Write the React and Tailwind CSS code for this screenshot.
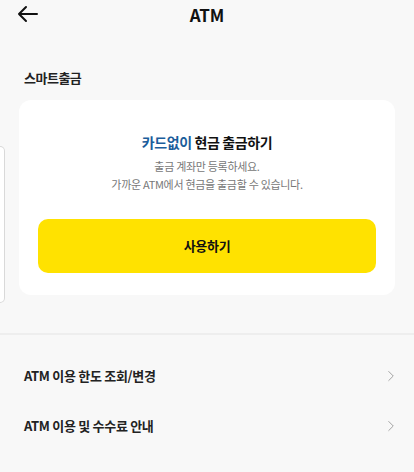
import { ChevronRight } from "lucide-react";

const font = { fontFamily: '"Noto Sans CJK KR", "Noto Sans", sans-serif' };

const MenuRow = ({ label }) => {
	return (
		<div className="flex h-[50px] items-center justify-between pl-6 pr-[14px]">
			<span className="text-[13px] font-bold tracking-[-0.3px] text-[#222]">{label}</span>
			<ChevronRight size={18} strokeWidth={1.3} className="text-[#a0a0a0]" />
		</div>
	);
};

export default function App() {
	return (
		<div className="h-[472px] w-[414px] overflow-hidden bg-[#f8f8f8]" style={font}>
			{/* header */}
			<div className="relative flex h-[30px] items-center justify-center">
				<svg
					className="absolute left-[16px] top-[4px]"
					width="23"
					height="20"
					viewBox="0 0 23 20"
					fill="none"
					stroke="#111"
					strokeWidth="2"
					strokeLinecap="round"
					strokeLinejoin="round"
				>
					<path d="M21 10H3M10 3L3 10l7 7" />
				</svg>
				<h1 className="text-[17px] font-bold text-[#111]">ATM</h1>
			</div>

			<div className="mt-[39px] pl-6 text-[13px] font-bold leading-[18px] tracking-[-0.5px] text-[#222]">
				스마트출금
			</div>

			{/* carousel */}
			<div className="mt-[13px] flex items-start gap-[14px]">
				<div className="mt-[46px] h-[157px] w-[5px] shrink-0 rounded-r-[6px] border border-l-0 border-[#d9d9d9] bg-white" />
				<div className="flex h-[195px] w-[376px] shrink-0 flex-col items-center rounded-[12px] bg-white pt-[32px]">
					<p className="text-[14px] font-bold leading-[20px] tracking-[-0.4px] text-[#111]">
						<span className="text-[#1b5d9b]">카드없이</span> 현금 출금하기
					</p>
					<p className="mt-[5px] text-center text-[11px] leading-[18px] tracking-[-0.3px] text-[#777]">
						출금 계좌만 등록하세요.
						<br />
						가까운 ATM에서 현금을 출금할 수 있습니다.
					</p>
					<button
						type="button"
						className="mt-[26px] flex h-[54px] w-[338px] items-center justify-center rounded-[10px] bg-[#ffe200] text-[13px] font-bold tracking-[-0.3px] text-[#111]"
					>
						사용하기
					</button>
				</div>
			</div>

			<div className="mt-[30px] h-[2px] bg-[#eeeeee]" />

			<div className="pt-[16px]">
				<MenuRow label="ATM 이용 한도 조회/변경" />
				<MenuRow label="ATM 이용 및 수수료 안내" />
			</div>
		</div>
	);
}
